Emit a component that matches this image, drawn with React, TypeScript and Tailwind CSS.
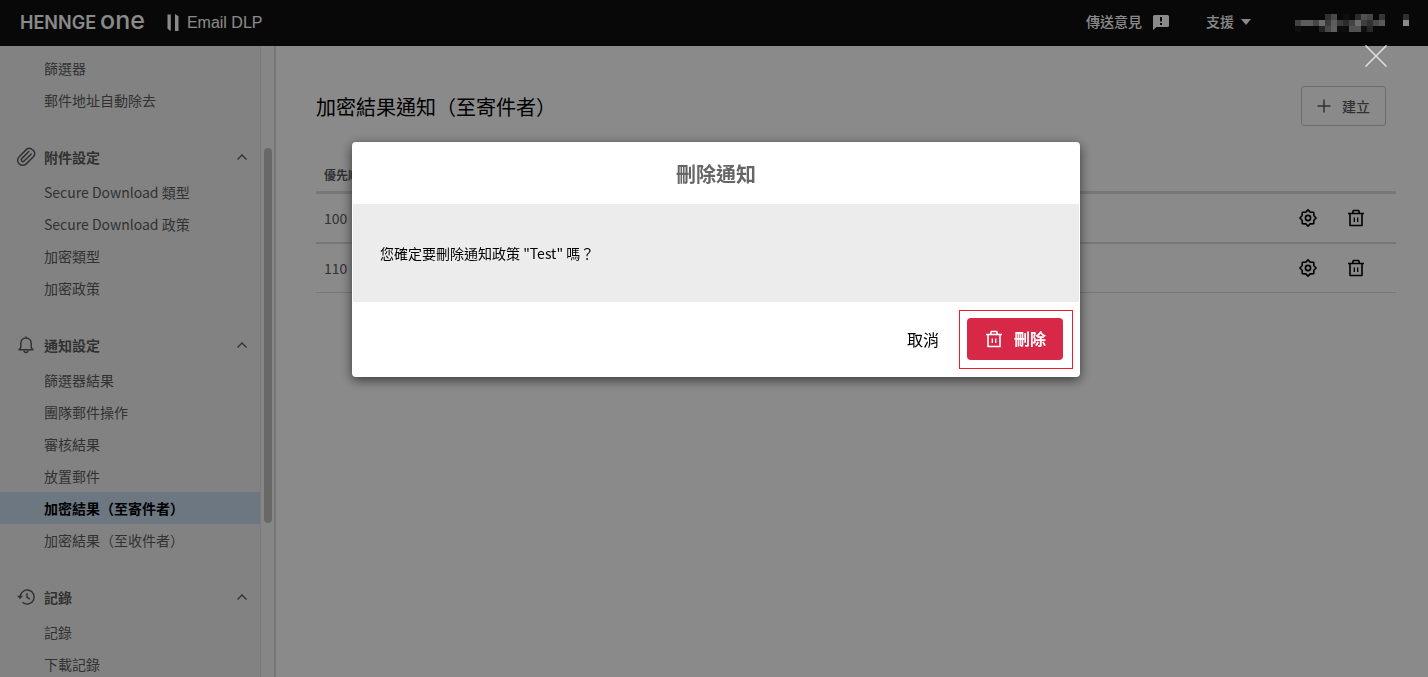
import React from "react";

interface NavSection {
  id: string;
  title?: string;
  icon?: React.ReactElement;
  items: string[];
}

const PaperclipIcon = () => (
  <svg viewBox="0 0 24 24" className="h-5 w-5" fill="none" stroke="currentColor" strokeWidth={1.8} strokeLinecap="round">
    <path d="M21.440 11.050l-9.190 9.190a6 6 0 0 1-8.490-8.490l9.190-9.190a4 4 0 0 1 5.660 0 M18.610 2.560a5.600 5.600 0 0 1 2.830 8.490" />
    <path d="M18.300 8.500l-8.600 8.300a2 2 0 0 1-2.830-2.830l8.490-8.480" />
  </svg>
);

const BellIcon = () => (
  <svg viewBox="0 0 20 20" className="h-5 w-5" fill="none" stroke="currentColor" strokeWidth={1.5} strokeLinejoin="round">
    <path d="M3 14.800h14l-1.800-2.200V8.400c0-3-2-5.400-5.200-5.400S4.800 5.400 4.800 8.400v4.200z" />
    <path d="M10 3V1.500M8 15.500a2 2 0 0 0 4 0" />
  </svg>
);

const HistoryIcon = () => (
  <svg viewBox="0 0 20 20" className="h-5 w-5" fill="none" stroke="currentColor" strokeWidth={1.5}>
    <path d="M4.200 10a7 7 0 1 1 2.300 5.200" />
    <path d="M11 6.200v4.200l3 1.800" />
    <path d="M1 8.800h6l-3 3.400z" fill="currentColor" stroke="none" />
  </svg>
);

const ChevronIcon = () => (
  <svg viewBox="0 0 12 12" className="h-3 w-3" fill="none" stroke="currentColor" strokeWidth={1.4}>
    <path d="M1.500 8.500L6 4l4.500 4.500" />
  </svg>
);

const PlusIcon = () => (
  <svg viewBox="0 0 14 14" className="h-[14px] w-[14px]" fill="none" stroke="currentColor" strokeWidth={1.5}>
    <path d="M7 .5v13M.5 7h13" />
  </svg>
);

const GearIcon = () => (
  <svg viewBox="0 0 20 20" className="h-5 w-5" fill="none" stroke="currentColor" strokeWidth={1.6} strokeLinejoin="round">
    <path d="M10 1.900l2.200 2.200 3.500.2.200 3.500L18.100 10l-2.200 2.200-.2 3.500-3.500.2L10 18.100l-2.200-2.200-3.500-.2-.2-3.500L1.900 10l2.200-2.200.2-3.500 3.500-.2z" />
    <circle cx="10" cy="10" r="2.600" />
  </svg>
);

const TrashIcon = () => (
  <svg viewBox="0 0 20 20" className="h-5 w-5" fill="none" stroke="currentColor" strokeWidth={1.6} strokeLinejoin="round">
    <path d="M2 5.500h16M4 5.500v12h12v-12M6.500 5.500l.8-3h5.400l.8 3" />
    <path d="M8.300 9.500v4.500M11.700 9.500v4.500" strokeWidth={1.3} />
  </svg>
);

const FeedbackIcon = () => (
  <svg viewBox="0 0 16 16" className="h-4 w-4" fill="currentColor">
    <path fillRule="evenodd" d="M1.500 1h13A1.500 1.500 0 0 1 16 2.500v9a1.500 1.500 0 0 1-1.500 1.500H3.500L0 16V2.500A1.500 1.500 0 0 1 1.500 1zM7 3v4.500h2V3zM7 9v2h2V9z" />
  </svg>
);

// grey levels of the masked account name, one row per line of blocks
const maskRows = [
  [0, 0, 0, 0, 0, 90, 135, 0, 28, 0, 80, 150, 130, 0, 100, 0, 0, 0, 90],
  [125, 170, 170, 130, 200, 110, 170, 110, 80, 125, 200, 115, 90, 135, 165, 0, 0, 0, 255],
  [28, 0, 0, 0, 65, 135, 175, 25, 25, 150, 150, 28, 75, 0, 0, 0, 0, 0, 0],
];

const MaskedAccount = () => (
  <svg viewBox="0 0 114 18" className="h-[18px] w-[114px]" shapeRendering="crispEdges" aria-hidden="true">
    {maskRows.map((row, y) =>
      row.map((v, x) =>
        v > 0 ? <rect key={`${x}-${y}`} x={x * 6} y={y * 6} width={6} height={6} fill={`rgb(${v},${v},${v})`} /> : null
      )
    )}
  </svg>
);

const sections: NavSection[] = [
  { id: "filter", items: ["篩選器", "郵件地址自動除去"] },
  {
    id: "attachment",
    title: "附件設定",
    icon: <PaperclipIcon />,
    items: ["Secure Download 類型", "Secure Download 政策", "加密類型", "加密政策"],
  },
  {
    id: "notice",
    title: "通知設定",
    icon: <BellIcon />,
    items: ["篩選器結果", "團隊郵件操作", "審核結果", "放置郵件", "加密結果（至寄件者）", "加密結果（至收件者）"],
  },
  { id: "log", title: "記錄", icon: <HistoryIcon />, items: ["記錄", "下載記錄"] },
];

const activeItem = "加密結果（至寄件者）";

const Header = () => (
  <header className="flex h-[46px] shrink-0 items-center justify-between bg-[#0f0f0f] pr-[19px] pl-5 text-white">
    <div className="flex items-center">
      <div className="flex items-baseline gap-1 pb-1 font-['Inter',sans-serif] leading-none">
        <span className="text-[18px] font-semibold">HENNGE</span>
        <span className="text-[25px] leading-[18px] font-medium">one</span>
      </div>
      <svg viewBox="0 0 12 18" className="ml-[22px] h-[18px] w-3" fill="currentColor">
        <path d="M.5.500H3.800v16.500L.5 14.800zM8 0l3.500 2.200V17L8 17z" />
      </svg>
      <span className="ml-2 font-['Liberation_Sans',Arial,sans-serif] text-base">Email DLP</span>
    </div>
    <div className="flex items-center text-sm font-medium">
      <button className="flex items-center gap-[11px] pb-0.5">
        <span className="pb-0.5">傳送意見</span>
        <FeedbackIcon />
      </button>
      <button className="ml-[37px] flex items-center gap-[7px] pb-0.5">
        <span className="pb-0.5">支援</span>
        <svg viewBox="0 0 10 6" className="h-[6px] w-[10px]" fill="currentColor">
          <path d="M0 0h10L5 6z" />
        </svg>
      </button>
      <div className="ml-11">
        <MaskedAccount />
      </div>
    </div>
  </header>
);

const Sidebar = () => (
  <aside className="flex w-[276px] shrink-0 overflow-hidden border-r-2 border-[#dcdcdc] bg-[#f1f1f1] text-sm text-[#5c5c5c]">
    <nav className="w-[260px] pt-1.5">
      {sections.map((section) => (
        <div key={section.id} className="mb-6">
          {section.title && (
            <button className="flex h-9 w-full items-center pr-3 pb-0.5 pl-4 font-bold">
              {section.icon}
              <span className="ml-2 flex-1 text-left">{section.title}</span>
              <ChevronIcon />
            </button>
          )}
          <ul>
            {section.items.map((item) => (
              <li key={item}>
                <a
                  href="#"
                  className={
                    item === activeItem
                      ? "block bg-[#c7dcf0] pl-11 leading-8 font-bold text-black"
                      : "block pl-11 leading-8"
                  }
                >
                  {item}
                </a>
              </li>
            ))}
          </ul>
        </div>
      ))}
    </nav>
    {/* scrollbar track */}
    <div className="flex-1 border-l border-[#e2e2e2] bg-[#f8f8f8] pt-[102px] pl-[3px]">
      <div className="h-[375px] w-2 rounded-full bg-[#c1c1c1]" />
    </div>
  </aside>
);

const PolicyTable = () => (
  <table className="mt-7 w-full border-separate border-spacing-0 text-left text-sm text-[#5c5c5c]">
    <thead>
      <tr>
        <th className="h-10 border-b-[3px] border-[#dcdcdc] pt-1 pl-2 text-xs font-bold">優先順序</th>
        <th className="border-b-[3px] border-[#dcdcdc]" />
      </tr>
    </thead>
    <tbody>
      {[100, 110].map((priority) => (
        <tr key={priority} className="group">
          <td className="h-[50px] border-b-2 border-[#dcdcdc] pl-2 group-last:h-[49px] group-last:border-b">{priority}</td>
          <td className="border-b-2 border-[#dcdcdc] group-last:border-b">
            <div className="flex justify-end gap-7 pr-[30px] text-black">
              <button aria-label="設定">
                <GearIcon />
              </button>
              <button aria-label="刪除">
                <TrashIcon />
              </button>
            </div>
          </td>
        </tr>
      ))}
    </tbody>
  </table>
);

const DeleteDialog = () => (
  <div className="fixed inset-0 flex items-start justify-center bg-black/46 pt-[142px] pl-1">
    <button aria-label="關閉" className="absolute top-[45px] right-[41px]">
      <svg viewBox="0 0 22 22" className="h-[22px] w-[22px]" stroke="#e0e0e0" strokeWidth={1.5}>
        <path d="M.5.5l21 21M21.500.5l-21 21" />
      </svg>
    </button>
    <div
      role="dialog"
      aria-labelledby="dialog-title"
      className="w-[728px] rounded bg-white shadow-[0_3px_12px_rgba(0,0,0,0.6)]"
    >
      <h2 id="dialog-title" className="pt-[17px] pb-[15px] text-center text-xl leading-[30px] font-bold text-[#666]">
        刪除通知
      </h2>
      <p className="mx-px bg-[#ececec] px-[27px] py-10 text-sm leading-[18px] text-black">
        您確定要刪除通知政策 "Test" 嗎？
      </p>
      <div className="flex items-center justify-end gap-5 px-[7px] py-2">
        <button className="pb-0.5 text-base text-black">取消</button>
        <div className="border border-[#ee1c2e] p-[7px] pr-[9px] pb-2">
          <button className="flex h-[42px] w-24 items-center justify-center gap-[10px] rounded bg-[#d72847] text-base font-bold text-white">
            <TrashIcon />
            <span className="pb-0.5">刪除</span>
          </button>
        </div>
      </div>
    </div>
  </div>
);

export default function App() {
  return (
    <div className="flex h-screen flex-col overflow-hidden bg-white font-['Noto_Sans_CJK_TC',sans-serif]">
      <Header />
      <div className="flex min-h-0 flex-1">
        <Sidebar />
        <main className="flex-1 pt-10 pr-8 pl-10">
          <div className="flex items-center justify-between pr-[10px]">
            <h1 className="pt-0.5 text-xl text-black">加密結果通知（至寄件者）</h1>
            <button className="flex h-10 items-center gap-[11px] rounded-[3px] border border-[#c4c4c4] px-[15px] text-sm font-medium text-[#5c5c5c]">
              <PlusIcon />
              建立
            </button>
          </div>
          <PolicyTable />
        </main>
      </div>
      <DeleteDialog />
    </div>
  );
}
